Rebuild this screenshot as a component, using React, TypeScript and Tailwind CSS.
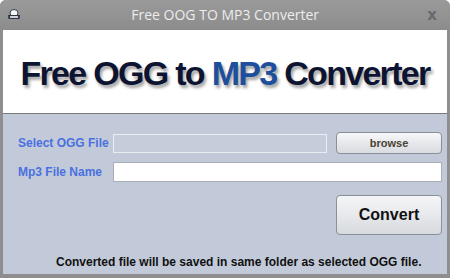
const DriveIcon = () => (
  <svg width="14" height="12" viewBox="0 0 14 12">
    <ellipse cx="7" cy="4" rx="4" ry="3.5" fill="#f4f6f8" stroke="#3a3f48" strokeWidth="1" />
    <path d="M1 6 L13 6 L12.5 10 L1.5 10 Z" fill="#2f3440" />
    <rect x="3" y="7" width="8" height="2" fill="#c9ced8" />
  </svg>
);

export default function App() {
  return (
    <div className="w-[450px] h-[278px] bg-[#8e8e8e] flex flex-col px-[3px] pb-[4px] rounded-tl-[6px] rounded-tr-[6px] overflow-hidden font-['Liberation_Sans',Arial,sans-serif]">
      {/* title bar */}
      <div className="h-[30px] -mx-[3px] px-[7px] flex items-center bg-gradient-to-b from-[#9a9a9a] to-[#8c8c8c]">
        <DriveIcon />
        <div className="flex-1 text-center text-[#ececec] text-[14px] font-['Open_Sans',sans-serif] leading-none pl-[2px]">
          Free OOG TO MP3 Converter
        </div>
        <span className="text-[#666a70] text-[15px] font-bold leading-none pr-[6px] font-['DejaVu_Sans',sans-serif]">x</span>
      </div>

      {/* banner */}
      <div className="h-[84px] bg-white border-b border-[#7a7a7a] flex items-center justify-center">
        <h1
          className="whitespace-nowrap text-[34px] font-bold text-[#0c1431] tracking-[-1.7px] leading-none pt-[3px]"
          style={{ textShadow: "2px 3px 3px rgba(90,90,90,0.55)" }}
        >
          Free OGG to <span className="text-[#1d4f9c]">MP3</span> Converter
        </h1>
      </div>

      {/* form */}
      <div className="flex-1 bg-[#c2cad9] flex flex-col pl-[15px] pr-[5px] pt-[18px]">
        <div className="flex items-center h-[22px]">
          <label className="w-[95px] text-[12px] font-bold text-[#4a6fe0]">Select OGG File</label>
          <div className="w-[214px] h-[19px] bg-[#c5ccda] border border-[#e9edf3]" />
          <button className="ml-[9px] w-[106px] h-[22px] rounded-[4px] border border-[#8a8f98] bg-gradient-to-b from-[#f7f8f9] via-[#e6e8eb] to-[#d9dce0] text-[11px] font-bold text-[#4a4330]">
            browse
          </button>
        </div>
        <div className="flex items-center mt-[8px] h-[20px]">
          <label className="w-[95px] text-[12px] font-bold text-[#4a6fe0]">Mp3 File Name</label>
          <div className="w-[329px] h-[20px] bg-white border border-[#a8adb6]" />
        </div>
        <div className="flex justify-end mt-[13px]">
          <button className="w-[106px] h-[40px] rounded-[4px] border border-[#8a8f98] bg-gradient-to-b from-[#f4f5f7] via-[#e7e9ec] to-[#d6d9dd] text-[16px] font-bold text-[#111]">
            Convert
          </button>
        </div>
        <p className="mt-[21px] pl-[38px] text-[12px] font-bold text-[#111] leading-none whitespace-nowrap">
          Converted file will be saved in same folder as selected OGG file.
        </p>
      </div>
    </div>
  );
}
